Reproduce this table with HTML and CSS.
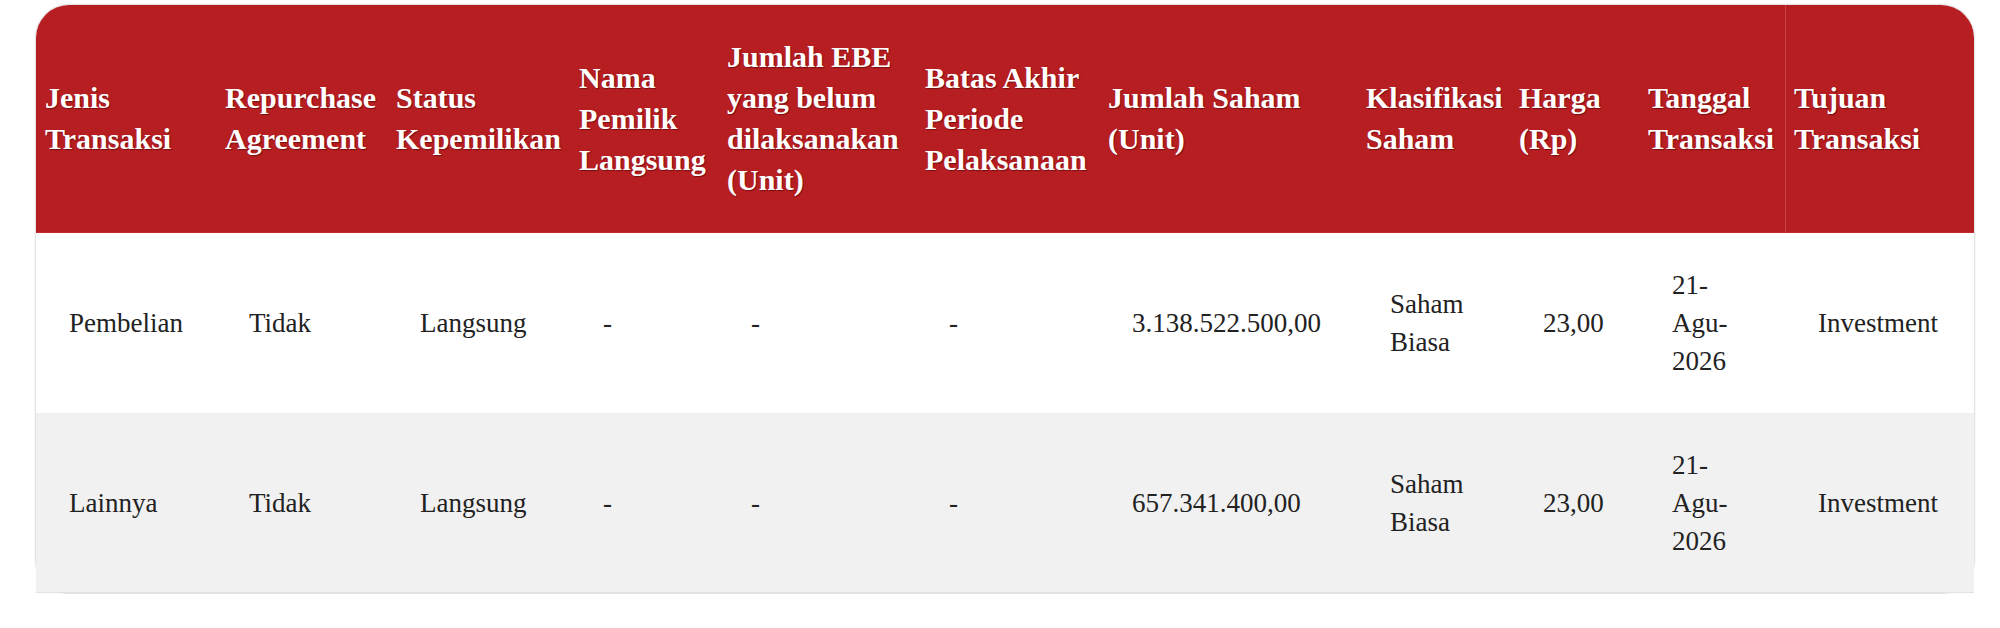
FILE: index.html
```html
<!DOCTYPE html>
<html lang="id">
<head>
<meta charset="utf-8">
<title>Transaksi Saham</title>
<link rel="stylesheet" href="styles.css">
</head>
<body>
<div class="card">
  <table class="tx">
    <colgroup>
      <col class="c1"><col class="c2"><col class="c3"><col class="c4"><col class="c5"><col class="c6"><col class="c7"><col class="c8"><col class="c9"><col class="c10"><col class="c11">
    </colgroup>
    <thead>
      <tr>
        <th>Jenis Transaksi</th>
        <th>Repurchase Agreement</th>
        <th>Status Kepemilikan</th>
        <th>Nama Pemilik Langsung</th>
        <th>Jumlah EBE yang belum dilaksanakan (Unit)</th>
        <th>Batas Akhir Periode Pelaksanaan</th>
        <th>Jumlah Saham (Unit)</th>
        <th>Klasifikasi Saham</th>
        <th>Harga (Rp)</th>
        <th>Tanggal Transaksi</th>
        <th class="last">Tujuan Transaksi</th>
      </tr>
    </thead>
    <tbody>
      <tr>
        <td>Pembelian</td>
        <td>Tidak</td>
        <td>Langsung</td>
        <td>-</td>
        <td>-</td>
        <td>-</td>
        <td>3.138.522.500,00</td>
        <td>Saham Biasa</td>
        <td>23,00</td>
        <td>21-Agu-2026</td>
        <td>Investment</td>
      </tr>
      <tr class="alt">
        <td>Lainnya</td>
        <td>Tidak</td>
        <td>Langsung</td>
        <td>-</td>
        <td>-</td>
        <td>-</td>
        <td>657.341.400,00</td>
        <td>Saham Biasa</td>
        <td>23,00</td>
        <td>21-Agu-2026</td>
        <td>Investment</td>
      </tr>
    </tbody>
  </table>
</div>
</body>
</html>
```

FILE: styles.css
```css
html, body {
  margin: 0;
  padding: 0;
  background: #ffffff;
}

body {
  font-family: "Liberation Serif", "Times New Roman", serif;
  color: #222222;
}

.card {
  margin: 4px 25px 0 35px;
  width: 1938px;
  border: 1px solid #e3e3e3;
  border-radius: 34px;
  box-shadow: 0 0 2px rgba(0, 0, 0, 0.08);
  background: #ffffff;
}

.tx {
  width: 1938px;
  table-layout: fixed;
  border-collapse: separate;
  border-spacing: 0;
}

.c1 { width: 180px; }
.c2 { width: 171px; }
.c3 { width: 183px; }
.c4 { width: 148px; }
.c5 { width: 198px; }
.c6 { width: 183px; }
.c7 { width: 258px; }
.c8 { width: 153px; }
.c9 { width: 129px; }
.c10 { width: 146px; }
.c11 { width: 189px; }

.tx th {
  background: #b71e22;
  color: #ffffff;
  font-weight: bold;
  font-size: 30px;
  line-height: 41px;
  text-align: left;
  vertical-align: middle;
  padding: 31px 4px 32px 9px;
  text-shadow: 1px 1px 1px rgba(70, 0, 0, 0.55);
  border-bottom: 1px solid #c12a2d;
}

.tx th:first-child {
  border-top-left-radius: 33px;
}

.tx th.last {
  border-top-right-radius: 33px;
  border-left: 1px solid #c44245;
  padding-left: 8px;
}

.tx td {
  font-size: 27px;
  line-height: 38px;
  text-align: left;
  vertical-align: middle;
  padding: 33px 28px 33px 33px;
  background: #ffffff;
  color: #222222;
}

.tx tr.alt td {
  background: #f1f1f1;
  border-bottom: 1px solid #e2e2e2;
  padding-bottom: 32px;
}
```
